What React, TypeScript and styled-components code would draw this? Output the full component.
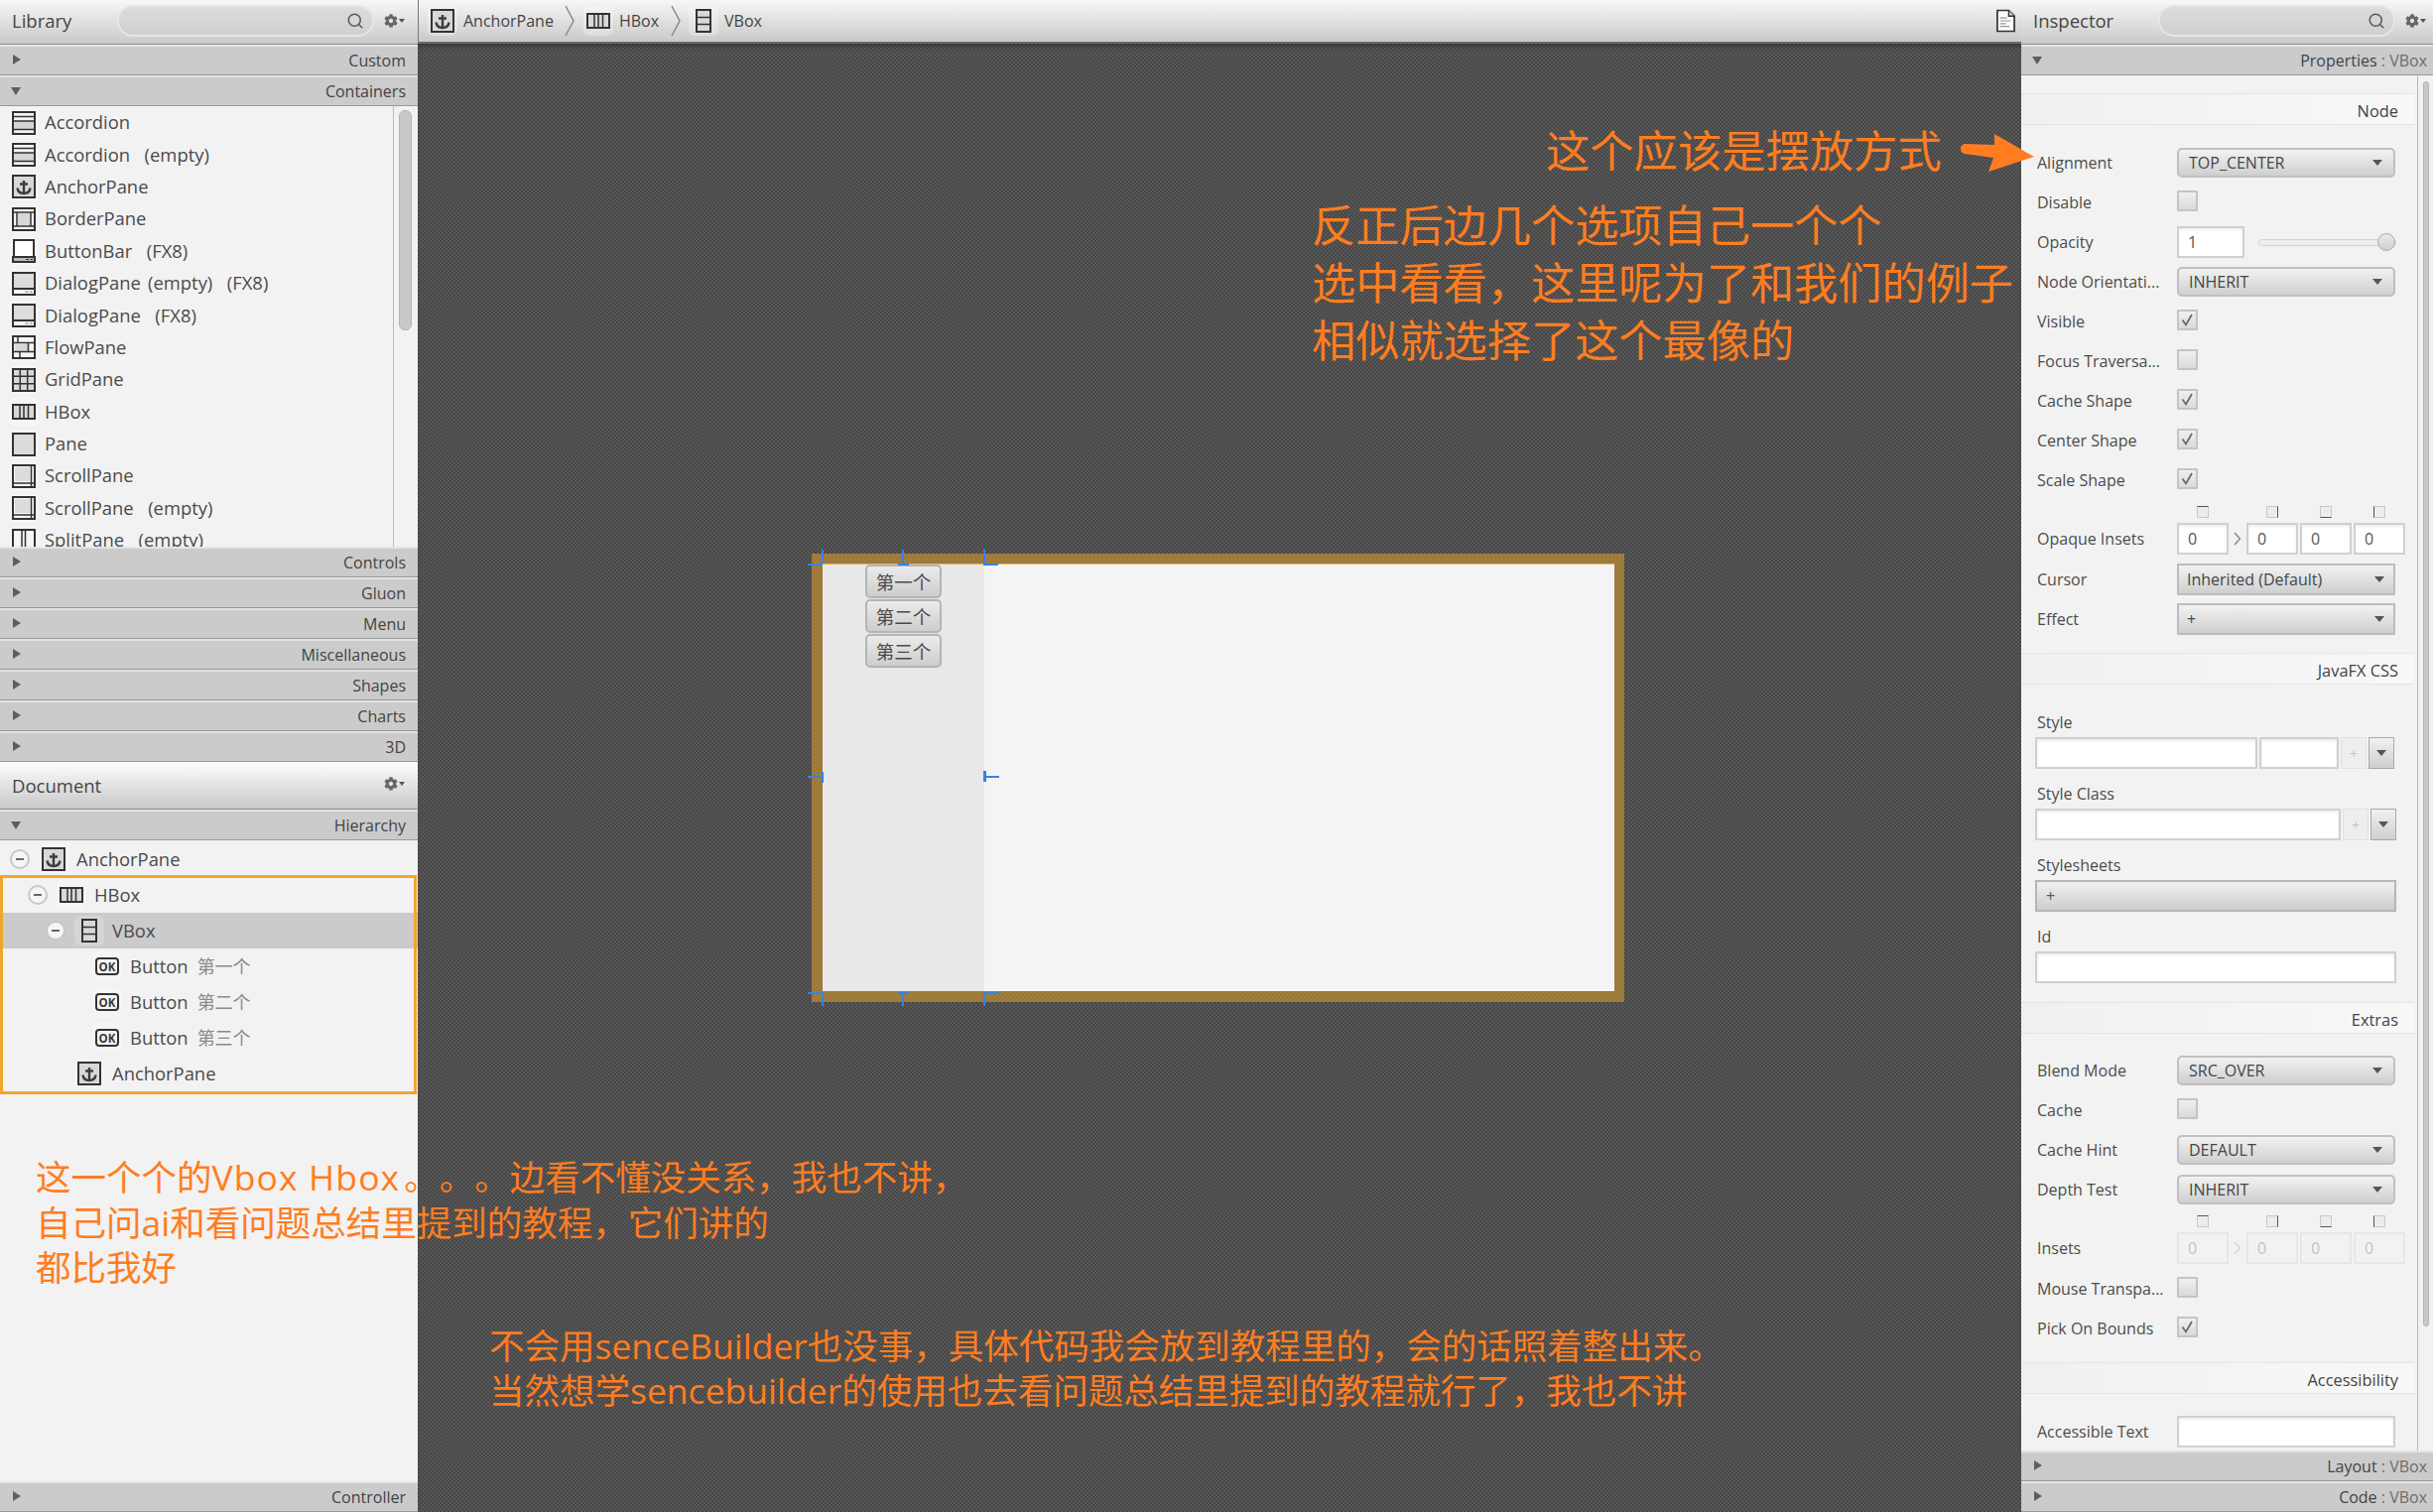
import React from 'react';
import styled, { createGlobalStyle } from 'styled-components';
import { Search } from 'lucide-react';
import { FaCog } from 'react-icons/fa';

const FONT = `"Open Sans", "Noto Sans CJK SC", sans-serif`;
const ORANGE = '#ff7d20';

const Global = createGlobalStyle`
  html, body { margin: 0; padding: 0; background: #4e4e4e; }
  * { box-sizing: border-box; }
  body { font-family: ${FONT}; color: #444; }
`;

// ---------- icons ----------
const Svg = ({ children }: { children: React.ReactNode }) => (
  <svg viewBox="0 0 24 24" width={24} height={24} fill="none" stroke="#333" strokeWidth={2}>
    {children}
  </svg>
);

const Anchor = () => (
  <Svg>
    <rect x="1" y="1" width="22" height="22" fill="#d8d8d8" />
    <path d="M12 6v13M8 9.5h8M5.5 13.5c.5 3.5 3 5.5 6.5 5.5s6-2 6.5-5.5" stroke="#3c3c3c" strokeWidth="2.4" />
  </Svg>
);
const Accordion = () => (
  <Svg>
    <rect x="1" y="10" width="22" height="8" fill="#d6d6d6" stroke="none" />
    <rect x="1" y="1" width="22" height="22" />
    <path d="M1 5.5h22M1 10h22M1 18.5h22" strokeWidth="1.5" />
  </Svg>
);
const Border = () => (
  <Svg>
    <rect x="6" y="6" width="12" height="12" fill="#d8d8d8" stroke="none" />
    <rect x="1" y="1" width="22" height="22" />
    <path d="M1 5h22M1 19h22M5 5v14M19 5v14" strokeWidth="1.5" />
  </Svg>
);
const ButtonBar = () => (
  <Svg>
    <rect x="2" y="1" width="20" height="17" fill="#fff" />
    <rect x="1" y="18" width="22" height="5" fill="#bcbcbc" />
    <path d="M14 20.5h3M18.5 20.5h2.5" strokeWidth="1.2" />
  </Svg>
);
const Dialog = () => (
  <Svg>
    <rect x="1" y="1" width="22" height="16" fill="#dcdcdc" />
    <rect x="1" y="17" width="22" height="6" fill="#f4f4f4" />
    <path d="M13.5 20h3M18 20h2.5" strokeWidth="1.2" stroke="#777" />
  </Svg>
);
const Flow = () => (
  <Svg>
    <rect x="1" y="1" width="22" height="22" />
    <rect x="3" y="9" width="13" height="7" fill="#d8d8d8" stroke="none" />
    <path d="M1 7.5h22M1 16.5h22M6 1v6.5M16.5 7.5v9M8 16.5v6.5" strokeWidth="1.5" />
  </Svg>
);
const Grid = () => (
  <Svg>
    <rect x="1" y="1" width="22" height="22" fill="#d8d8d8" />
    <path d="M8.3 1v22M15.7 1v22M1 8.3h22M1 15.7h22" strokeWidth="1.5" />
  </Svg>
);
const HBox = () => (
  <Svg>
    <rect x="1" y="5" width="22" height="14" fill="#d8d8d8" />
    <path d="M8 5v14M12 5v14M16.5 5v14" strokeWidth="1.5" />
  </Svg>
);
const VBox = () => (
  <Svg>
    <rect x="5" y="1" width="14" height="22" fill="#d8d8d8" />
    <path d="M5 8.5h14M5 15.5h14" strokeWidth="1.5" />
  </Svg>
);
const Pane = () => (
  <Svg>
    <rect x="1" y="1" width="22" height="22" fill="#dcdcdc" />
  </Svg>
);
const Scroll = () => (
  <Svg>
    <rect x="1" y="1" width="22" height="22" />
    <rect x="3" y="3" width="15" height="14" fill="#dcdcdc" stroke="none" />
    <path d="M1 19h22M19.5 1v22" strokeWidth="1.5" />
  </Svg>
);
const Split = () => (
  <Svg>
    <rect x="1" y="1" width="22" height="22" />
    <path d="M10 1v22M13.5 1v22" strokeWidth="1.5" />
  </Svg>
);
const OkButton = () => (
  <Svg>
    <rect x="1" y="4" width="22" height="16" rx="3" fill="#f4f4f4" />
    <text x="12" y="16.5" textAnchor="middle" fontSize="11.5" fontWeight="700" fontFamily="Open Sans" fill="#3a3a3a" stroke="none">OK</text>
  </Svg>
);
const DocIcon = () => (
  <svg viewBox="0 0 22 24" width={21} height={24} fill="#fafafa" stroke="#333" strokeWidth={1.8}>
    <path d="M2 1h12l6 6v16H2z" />
    <path d="M14 1v6h6" fill="#ccc" strokeWidth="1.4" />
    <path d="M5 9h7M5 12h11M5 15h6M5 18h10" stroke="#999" strokeWidth="1.3" />
  </svg>
);

const Check = () => (
  <svg viewBox="0 0 17 17" width={17} height={17} fill="none" stroke="#666" strokeWidth={1.7}>
    <path d="M3.5 8.5l3.500 5L13 3" />
  </svg>
);

const Chevron = ({ light }: { light?: boolean }) => (
  <svg viewBox="0 0 8 14" width={8} height={14} fill="none" stroke={light ? '#d6d6d6' : '#8a8a8a'} strokeWidth={1.5}>
    <path d="M1 1l5.500 6L1 13" />
  </svg>
);

// ---------- page ----------
const Page = styled.div`
  position: relative;
  display: flex;
  width: 2452px;
  height: 1524px;
  overflow: hidden;
`;

const SidePanel = styled.aside<{ $width: number }>`
  display: flex;
  flex-direction: column;
  flex: 0 0 ${p => p.$width}px;
  height: 100%;
  background: #f2f2f2;
`;

const PanelHeader = styled.header<{ $tall?: boolean; $right?: number }>`
  display: flex;
  align-items: center;
  flex: 0 0 ${p => (p.$tall ? 48 : 45)}px;
  padding: 0 ${p => p.$right ?? 13}px 0 12px;
  background: linear-gradient(${p => (p.$tall ? '#fdfdfd' : '#f8f8f8')}, #c9c9c9);
  border-bottom: 1px solid #8f8f8f;
`;

const PanelTitle = styled.span<{ $raised?: boolean }>`
  flex: 1;
  padding-bottom: ${p => (p.$raised ? 3 : 0)}px;
  font-size: 18.5px;
  color: #454545;
`;

const SearchBox = styled.div<{ $width: number }>`
  display: flex;
  align-items: center;
  justify-content: flex-end;
  width: ${p => p.$width}px;
  height: 32px;
  margin: -3px 10px 0 0;
  padding-right: 8px;
  color: #5a5a5a;
  border: 2px solid #e6e6e6;
  border-radius: 16px;
  background: linear-gradient(#dcdcdc, #d0d0d0);
`;

const GearMenu = styled.span`
  display: flex;
  align-items: center;
  gap: 1px;
  margin-top: -3px;
  color: #666;
  font-size: 14px;
  &::after {
    content: '';
    border-top: 4px solid #555;
    border-left: 3.5px solid transparent;
    border-right: 3.5px solid transparent;
  }
`;

const Bar = styled.div<{ $open?: boolean; $right?: number }>`
  position: relative;
  display: flex;
  align-items: center;
  justify-content: flex-end;
  flex: 0 0 31px;
  padding-right: ${p => p.$right ?? 12}px;
  font-size: 16px;
  color: #434343;
  background: #cbcbcb;
  border-top: 2px solid #e4e4e4;
  border-bottom: 1.5px solid #999;
  &::before {
    content: '';
    position: absolute;
    left: 13px;
    top: 8px;
    ${p =>
      p.$open
        ? `border-top: 8px solid #5e5e5e; border-left: 5px solid transparent; border-right: 5px solid transparent; top: 10px; left: 11px;`
        : `border-left: 8px solid #5e5e5e; border-top: 5px solid transparent; border-bottom: 5px solid transparent;`}
  }
`;

const Muted = styled.span`
  color: #6d6d6d;
  white-space: pre;
`;

// library list
const LibraryList = styled.div`
  display: flex;
  flex: 0 0 444px;
  overflow: hidden;
`;

const LibraryItems = styled.div`
  flex: 0 0 397px;
  padding-top: 0.5px;
  overflow: hidden;
  border-right: 1.5px solid #bcbcbc;
`;

const LibraryItem = styled.div`
  display: flex;
  align-items: center;
  gap: 9px;
  height: 32.4px;
  padding-left: 12px;
  font-size: 18.4px;
  word-spacing: 2.5px;
  white-space: pre;
  color: #4a4a4a;
`;

const LibraryName = styled.span`
  padding-bottom: 2px;
`;

const IconTile = styled.span<{ $strong?: boolean }>`
  display: inline-flex;
  flex: 0 0 24px;
  height: 24px;
  border-radius: 3px;
  background: ${p => (p.$strong ? 'rgba(255,255,255,.2)' : 'rgba(255,255,255,.28)')};
  box-shadow: 0 0 0 3px ${p => (p.$strong ? 'rgba(255,255,255,.2)' : 'rgba(255,255,255,.28)')};
`;

const ListRail = styled.div`
  flex: 1;
  padding: 4px 6px 0 5px;
`;

const RailThumb = styled.div<{ $height: number }>`
  height: ${p => p.$height}px;
  border-radius: 6px;
  background: #c9c9c9;
  border: 1px solid #b4b4b4;
`;

// tree
const Tree = styled.div`
  position: relative;
  flex: 1;
  padding-top: 1px;
`;

const TreeRow = styled.div<{ $level: number; $selected?: boolean }>`
  display: flex;
  align-items: center;
  height: 36px;
  padding-left: ${p => 10 + p.$level * 18}px;
  font-size: 18.4px;
  color: #4a4a4a;
  background: ${p => (p.$selected ? '#cbcbcb' : 'transparent')};
`;

const ExpandDot = styled.span<{ $hidden?: boolean }>`
  display: flex;
  align-items: center;
  justify-content: center;
  flex: 0 0 20px;
  height: 20px;
  margin-right: 12px;
  border-radius: 50%;
  border: 2px solid #c8c8c8;
  background: #f5f5f5;
  visibility: ${p => (p.$hidden ? 'hidden' : 'visible')};
  &::after {
    content: '';
    width: 8px;
    height: 2px;
    background: #666;
  }
`;

const TreeLabel = styled.span`
  margin-left: 11px;
  padding-bottom: 2px;
`;

const TreeValue = styled.span`
  margin-left: 9px;
  padding-bottom: 2px;
  font-size: 18px;
  color: #8a8a8a;
`;

const TreeSelection = styled.div`
  position: absolute;
  left: 0;
  right: 1px;
  top: 35px;
  height: 221px;
  border: 3px solid #f0a62d;
  pointer-events: none;
`;

// center
const Center = styled.main`
  display: flex;
  flex-direction: column;
  flex: 1;
  height: 100%;
`;

const Breadcrumb = styled.nav`
  display: flex;
  align-items: center;
  flex: 0 0 44px;
  padding: 0 5px 0 12px;
  font-size: 16px;
  color: #444;
  background: linear-gradient(#f7f7f7, #c9c9c9);
  border-left: 1px solid #777;
  border-bottom: 2px solid #6d6d6d;
`;

const Crumb = styled.span`
  display: flex;
  align-items: center;
  gap: 9px;
`;

const CrumbArrow = styled.svg`
  width: 12px;
  height: 32px;
  margin: 0 10.5px;
  fill: none;
  stroke: #8a8a8a;
  stroke-width: 1.5;
`;

const DocSlot = styled.span`
  display: flex;
  margin-left: auto;
`;

const Workspace = styled.div`
  display: flex;
  flex: 1;
  align-items: center;
  justify-content: center;
  padding-right: 3px;
  background: repeating-conic-gradient(#585858 0 25%, #474747 0 50%) 0 0 / 4px 4px;
  box-shadow: inset 0 5px 5px -3px rgba(0, 0, 0, 0.35);
`;

const Stage = styled.div`
  position: relative;
  width: 819px;
  height: 452px;
  padding: 11px 10px 11px 11px;
  background: repeating-conic-gradient(#a37f40 0 25%, #9a7638 0 50%) 0 0 / 4px 4px;
`;

const StageInner = styled.div`
  display: flex;
  width: 100%;
  height: 100%;
  background: #f4f4f4;
  box-shadow: 0 -1px 0 #dcb56b;
`;

const StageColumn = styled.div`
  display: flex;
  flex-direction: column;
  align-items: center;
  gap: 1px;
  flex: 0 0 163px;
  background: #e8e8e8;
`;

const StageButton = styled.div`
  display: flex;
  align-items: center;
  justify-content: center;
  width: 77px;
  height: 34px;
  font-size: 18.5px;
  color: #4a4a4a;
  background: linear-gradient(#ebebeb, #cdcdcd);
  border: 2px solid #b4b4b4;
  border-radius: 5px;
`;

const Handle = styled.span<{ $l: number; $t: number; $w: number; $h: number }>`
  position: absolute;
  left: ${p => p.$l}px;
  top: ${p => p.$t}px;
  width: ${p => p.$w}px;
  height: ${p => p.$h}px;
  background: #3184ea;
`;

// inspector
const InspectorBody = styled.div`
  display: flex;
  flex: 1;
  min-height: 0;
  overflow: hidden;
`;

const InspectorContent = styled.div`
  flex: 0 0 396px;
  padding-top: 18px;
  overflow: hidden;
`;

const InspectorRail = styled.div`
  flex: 1;
  margin-left: 3px;
  padding: 6px 4px 0 5px;
  border-left: 1.5px solid #b8b8b8;
`;

const SectionBar = styled.div`
  display: flex;
  align-items: center;
  justify-content: flex-end;
  height: 32px;
  padding: 2px 16px 0 0;
  font-size: 16.4px;
  color: #444;
  background: linear-gradient(90deg, #f0f0f0, #f8f8f8);
  border-top: 1.5px solid #e4e4e4;
  border-bottom: 1.5px solid #e4e4e4;
`;

const SectionBody = styled.div<{ $top?: number; $bottom?: number }>`
  padding: ${p => p.$top ?? 18}px 0 ${p => p.$bottom ?? 14}px;
`;

const Row = styled.div`
  display: grid;
  grid-template-columns: 141px auto;
  align-items: center;
  height: 40px;
  padding-left: 16px;
`;

const InsetRow = styled(Row)`
  align-items: end;
  height: 60px;
  padding-bottom: 5px;
`;

const Label = styled.span`
  font-size: 16px;
  color: #4c4c4c;
  white-space: nowrap;
`;

const InsetLabel = styled(Label)`
  line-height: 32px;
`;

const Select = styled.div<{ $square?: boolean }>`
  display: flex;
  align-items: center;
  justify-content: space-between;
  width: 220px;
  height: ${p => (p.$square ? 32 : 30)}px;
  padding: 0 ${p => (p.$square ? 9 : 11)}px 0 ${p => (p.$square ? 8 : 10)}px;
  font-size: 16px;
  color: #454545;
  background: linear-gradient(#f2f2f2, #cfcfcf);
  border: 2px solid ${p => (p.$square ? '#bcbcbc' : '#c0c0c0')};
  border-radius: ${p => (p.$square ? 1 : 5)}px;
`;

const Caret = styled.span`
  border-top: 6px solid #555;
  border-left: 5px solid transparent;
  border-right: 5px solid transparent;
`;

const CheckBox = styled.span`
  display: flex;
  align-items: center;
  justify-content: center;
  width: 21px;
  height: 21px;
  margin-top: -3px;
  background: linear-gradient(#f0f0f0, #dadada);
  border: 2px solid #c4c4c4;
  border-radius: 1px;
`;

const OpacityControl = styled.div`
  display: flex;
  align-items: center;
  gap: 14px;
`;

const TextField = styled.div<{ $width: number; $disabled?: boolean }>`
  display: flex;
  align-items: center;
  flex: none;
  width: ${p => p.$width}px;
  height: 32px;
  padding-left: 9px;
  font-size: 16px;
  color: ${p => (p.$disabled ? '#c4c4c4' : '#555')};
  background: ${p => (p.$disabled ? '#f2f2f2' : '#fff')};
  border: 2px solid ${p => (p.$disabled ? '#e6e6e6' : '#d0d0d0')};
  box-shadow: ${p => (p.$disabled ? 'none' : 'inset 0 2px 3px rgba(0,0,0,.07)')};
`;

const SliderTrack = styled.div`
  position: relative;
  width: 139px;
  height: 7px;
  background: #eeeeee;
  border: 1.5px solid #d2d2d2;
  border-radius: 4px;
`;

const SliderThumb = styled.span`
  position: absolute;
  right: 0;
  top: -7px;
  width: 18px;
  height: 18px;
  border-radius: 50%;
  background: linear-gradient(#eaeaea, #cfcfcf);
  border: 1.5px solid #aaa;
`;

const InsetGroup = styled.div`
  display: flex;
  gap: 2px;
`;

const InsetCell = styled.div`
  display: flex;
  flex-direction: column;
  align-items: center;
  gap: 5px;
`;

const SideIcon = styled.span<{ $side: 'top' | 'right' | 'bottom' | 'left' }>`
  width: 12px;
  height: 12px;
  background: #ececec;
  border: 1.5px solid #c8c8c8;
  border-${p => p.$side}-color: #555;
`;

const InsetArrow = styled.span`
  display: flex;
  align-items: center;
  justify-content: center;
  align-self: flex-end;
  flex: 0 0 14px;
  height: 32px;
`;

const FieldBlock = styled.div`
  padding: 0 0 5px 14px;
`;

const BlockLabel = styled(Label)`
  display: flex;
  align-items: center;
  height: 35px;
  padding: 5px 0 0 2px;
`;

const FieldLine = styled.div`
  display: flex;
  gap: 2px;
`;

const PlusButton = styled.span`
  display: flex;
  align-items: center;
  justify-content: center;
  flex: 0 0 26px;
  height: 32px;
  font-size: 15px;
  color: #c6c6c6;
  background: #eeeeee;
  border: 1.5px solid #e2e2e2;
`;

const DropButton = styled.span`
  display: flex;
  align-items: center;
  justify-content: center;
  flex: 0 0 26px;
  height: 32px;
  background: linear-gradient(#f0f0f0, #cfcfcf);
  border: 1.5px solid #a9a9a9;
`;

const AddButton = styled.div`
  display: flex;
  align-items: center;
  width: 364px;
  height: 32px;
  padding-left: 9px;
  font-size: 16px;
  color: #555;
  background: linear-gradient(#f0f0f0, #cdcdcd);
  border: 2px solid #b6b6b6;
`;

// annotations laid over the window
const Note = styled.div<{ $left: number; $top: number; $size: number; $line: number }>`
  position: absolute;
  left: ${p => p.$left}px;
  top: ${p => p.$top}px;
  font-size: ${p => p.$size}px;
  line-height: ${p => p.$line}px;
  color: ${ORANGE};
  white-space: pre;
  text-spacing-trim: space-all;
  pointer-events: none;
`;

const NoteLatin = styled.span`
  letter-spacing: 1.1px;
  margin-right: 4px;
`;

const NoteArrow = styled.svg`
  position: absolute;
  left: 1976px;
  top: 135px;
  width: 74px;
  height: 38px;
  fill: ${ORANGE};
`;

const libraryItems: [React.FC, string][] = [
  [Accordion, 'Accordion'],
  [Accordion, 'Accordion  (empty)'],
  [Anchor, 'AnchorPane'],
  [Border, 'BorderPane'],
  [ButtonBar, 'ButtonBar  (FX8)'],
  [Dialog, 'DialogPane (empty)  (FX8)'],
  [Dialog, 'DialogPane  (FX8)'],
  [Flow, 'FlowPane'],
  [Grid, 'GridPane'],
  [HBox, 'HBox'],
  [Pane, 'Pane'],
  [Scroll, 'ScrollPane'],
  [Scroll, 'ScrollPane  (empty)'],
  [Split, 'SplitPane  (empty)'],
];

const handles = [
  [10, -4, 2, 14], [-4, 10, 14, 2],
  [91, -4, 2, 14], [87, 10, 11, 2],
  [173, -4, 2, 14], [173, 10, 15, 2],
  [-4, 224, 14, 2], [10, 220, 2, 11],
  [174, 224, 15, 2], [173, 219, 3, 11],
  [10, 442, 2, 14], [-4, 442, 14, 2],
  [91, 442, 2, 14], [87, 442, 11, 2],
  [173, 442, 2, 14], [174, 442, 15, 2],
];

const HeaderSearch = ({ width }: { width: number }) => (
  <>
    <SearchBox $width={width}>
      <Search size={18} strokeWidth={2} />
    </SearchBox>
    <GearMenu>
      <FaCog />
    </GearMenu>
  </>
);

const CheckRow = ({ label, checked }: { label: string; checked?: boolean }) => (
  <Row>
    <Label>{label}</Label>
    <CheckBox>{checked && <Check />}</CheckBox>
  </Row>
);

const SelectRow = ({ label, value, square }: { label: string; value: string; square?: boolean }) => (
  <Row>
    <Label>{label}</Label>
    <Select $square={square}>
      {value}
      <Caret />
    </Select>
  </Row>
);

const InsetsRow = ({ label, disabled }: { label: string; disabled?: boolean }) => (
  <InsetRow>
    <InsetLabel>{label}</InsetLabel>
    <InsetGroup>
      <InsetCell>
        <SideIcon $side="top" />
        <TextField $width={52} $disabled={disabled}>0</TextField>
      </InsetCell>
      <InsetArrow>
        <Chevron light={disabled} />
      </InsetArrow>
      {(['right', 'bottom', 'left'] as const).map(side => (
        <InsetCell key={side}>
          <SideIcon $side={side} />
          <TextField $width={52} $disabled={disabled}>0</TextField>
        </InsetCell>
      ))}
    </InsetGroup>
  </InsetRow>
);

const App = () => {
  return (
    <Page>
      <Global />

      <SidePanel $width={421}>
        <PanelHeader>
          <PanelTitle $raised>Library</PanelTitle>
          <HeaderSearch width={259} />
        </PanelHeader>
        <Bar>Custom</Bar>
        <Bar $open>Containers</Bar>
        <LibraryList>
          <LibraryItems>
            {libraryItems.map(([Icon, name]) => (
              <LibraryItem key={name}>
                <IconTile>
                  <Icon />
                </IconTile>
                <LibraryName>{name}</LibraryName>
              </LibraryItem>
            ))}
          </LibraryItems>
          <ListRail>
            <RailThumb $height={222} />
          </ListRail>
        </LibraryList>
        {['Controls', 'Gluon', 'Menu', 'Miscellaneous', 'Shapes', 'Charts', '3D'].map(name => (
          <Bar key={name}>{name}</Bar>
        ))}
        <PanelHeader $tall>
          <PanelTitle>Document</PanelTitle>
          <GearMenu>
            <FaCog />
          </GearMenu>
        </PanelHeader>
        <Bar $open>Hierarchy</Bar>
        <Tree>
          <TreeRow $level={0}>
            <ExpandDot />
            <IconTile><Anchor /></IconTile>
            <TreeLabel>AnchorPane</TreeLabel>
          </TreeRow>
          <TreeRow $level={1}>
            <ExpandDot />
            <IconTile><HBox /></IconTile>
            <TreeLabel>HBox</TreeLabel>
          </TreeRow>
          <TreeRow $level={2} $selected>
            <ExpandDot />
            <IconTile $strong><VBox /></IconTile>
            <TreeLabel>VBox</TreeLabel>
          </TreeRow>
          {['第一个', '第二个', '第三个'].map(text => (
            <TreeRow $level={3} key={text}>
              <ExpandDot $hidden />
              <IconTile><OkButton /></IconTile>
              <TreeLabel>Button</TreeLabel>
              <TreeValue>{text}</TreeValue>
            </TreeRow>
          ))}
          <TreeRow $level={2}>
            <ExpandDot $hidden />
            <IconTile><Anchor /></IconTile>
            <TreeLabel>AnchorPane</TreeLabel>
          </TreeRow>
          <TreeSelection />
        </Tree>
        <Bar>Controller</Bar>
      </SidePanel>

      <Center>
        <Breadcrumb>
          <Crumb><IconTile><Anchor /></IconTile>AnchorPane</Crumb>
          <CrumbArrow viewBox="0 0 12 32"><path d="M2 1l8 15-8 15" /></CrumbArrow>
          <Crumb><IconTile><HBox /></IconTile>HBox</Crumb>
          <CrumbArrow viewBox="0 0 12 32"><path d="M2 1l8 15-8 15" /></CrumbArrow>
          <Crumb><IconTile><VBox /></IconTile>VBox</Crumb>
          <DocSlot><DocIcon /></DocSlot>
        </Breadcrumb>
        <Workspace>
          <Stage>
            <StageInner>
              <StageColumn>
                {['第一个', '第二个', '第三个'].map(text => (
                  <StageButton key={text}>{text}</StageButton>
                ))}
              </StageColumn>
            </StageInner>
            {handles.map(([l, t, w, h]) => (
              <Handle key={`${l}-${t}-${w}`} $l={l} $t={t} $w={w} $h={h} />
            ))}
          </Stage>
        </Workspace>
      </Center>

      <SidePanel $width={415}>
        <PanelHeader $right={7}>
          <PanelTitle $raised>Inspector</PanelTitle>
          <HeaderSearch width={239} />
        </PanelHeader>
        <Bar $open $right={6}>Properties&nbsp;<Muted>: VBox</Muted></Bar>
        <InspectorBody>
          <InspectorContent>
            <SectionBar>Node</SectionBar>
            <SectionBody>
              <SelectRow label="Alignment" value="TOP_CENTER" />
              <CheckRow label="Disable" />
              <Row>
                <Label>Opacity</Label>
                <OpacityControl>
                  <TextField $width={68}>1</TextField>
                  <SliderTrack><SliderThumb /></SliderTrack>
                </OpacityControl>
              </Row>
              <SelectRow label="Node Orientati..." value="INHERIT" />
              <CheckRow label="Visible" checked />
              <CheckRow label="Focus Traversa..." />
              <CheckRow label="Cache Shape" checked />
              <CheckRow label="Center Shape" checked />
              <CheckRow label="Scale Shape" checked />
              <InsetsRow label="Opaque Insets" />
              <SelectRow label="Cursor" value="Inherited (Default)" square />
              <SelectRow label="Effect" value="+" square />
            </SectionBody>

            <SectionBar>JavaFX CSS</SectionBar>
            <SectionBody>
              <FieldBlock>
                <BlockLabel>Style</BlockLabel>
                <FieldLine>
                  <TextField $width={224} />
                  <TextField $width={80} />
                  <PlusButton>+</PlusButton>
                  <DropButton><Caret /></DropButton>
                </FieldLine>
              </FieldBlock>
              <FieldBlock>
                <BlockLabel>Style Class</BlockLabel>
                <FieldLine>
                  <TextField $width={308} />
                  <PlusButton>+</PlusButton>
                  <DropButton><Caret /></DropButton>
                </FieldLine>
              </FieldBlock>
              <FieldBlock>
                <BlockLabel>Stylesheets</BlockLabel>
                <AddButton>+</AddButton>
              </FieldBlock>
              <FieldBlock>
                <BlockLabel>Id</BlockLabel>
                <TextField $width={364} />
              </FieldBlock>
            </SectionBody>

            <SectionBar>Extras</SectionBar>
            <SectionBody $top={17}>
              <SelectRow label="Blend Mode" value="SRC_OVER" />
              <CheckRow label="Cache" />
              <SelectRow label="Cache Hint" value="DEFAULT" />
              <SelectRow label="Depth Test" value="INHERIT" />
              <InsetsRow label="Insets" disabled />
              <CheckRow label="Mouse Transpa..." />
              <CheckRow label="Pick On Bounds" checked />
            </SectionBody>

            <SectionBar>Accessibility</SectionBar>
            <SectionBody>
              <Row>
                <Label>Accessible Text</Label>
                <TextField $width={220} />
              </Row>
            </SectionBody>
          </InspectorContent>
          <InspectorRail>
            <RailThumb $height={1255} />
          </InspectorRail>
        </InspectorBody>
        <Bar $right={6}>Layout&nbsp;<Muted>: VBox</Muted></Bar>
        <Bar $right={6}>Code&nbsp;<Muted>: VBox</Muted></Bar>
      </SidePanel>

      <Note $left={1558} $top={123} $size={44.3} $line={58}>这个应该是摆放方式</Note>
      <NoteArrow viewBox="0 0 74 38">
        <path d="M4 10l30 1-0-11 40 23-46 15 5-14-29-4c-5-1-6-9 0-10z" />
      </NoteArrow>
      <Note $left={1322} $top={198} $size={44.2} $line={58}>
        {'反正后边几个选项自己一个个\n选中看看，这里呢为了和我们的例子\n相似就选择了这个最像的'}
      </Note>
      <Note $left={36} $top={1164} $size={35.5} $line={45.5}>
        这一个个的<NoteLatin>Vbox Hbox</NoteLatin>
        {'。。。边看不懂没关系，我也不讲，\n自己问ai和看问题总结里提到的教程，它们讲的\n都比我好'}
      </Note>
      <Note $left={493} $top={1334} $size={35.5} $line={45}>
        {'不会用senceBuilder也没事，具体代码我会放到教程里的，会的话照着整出来。\n当然想学sencebuilder的使用也去看问题总结里提到的教程就行了，我也不讲'}
      </Note>
    </Page>
  );
};

export default App;
